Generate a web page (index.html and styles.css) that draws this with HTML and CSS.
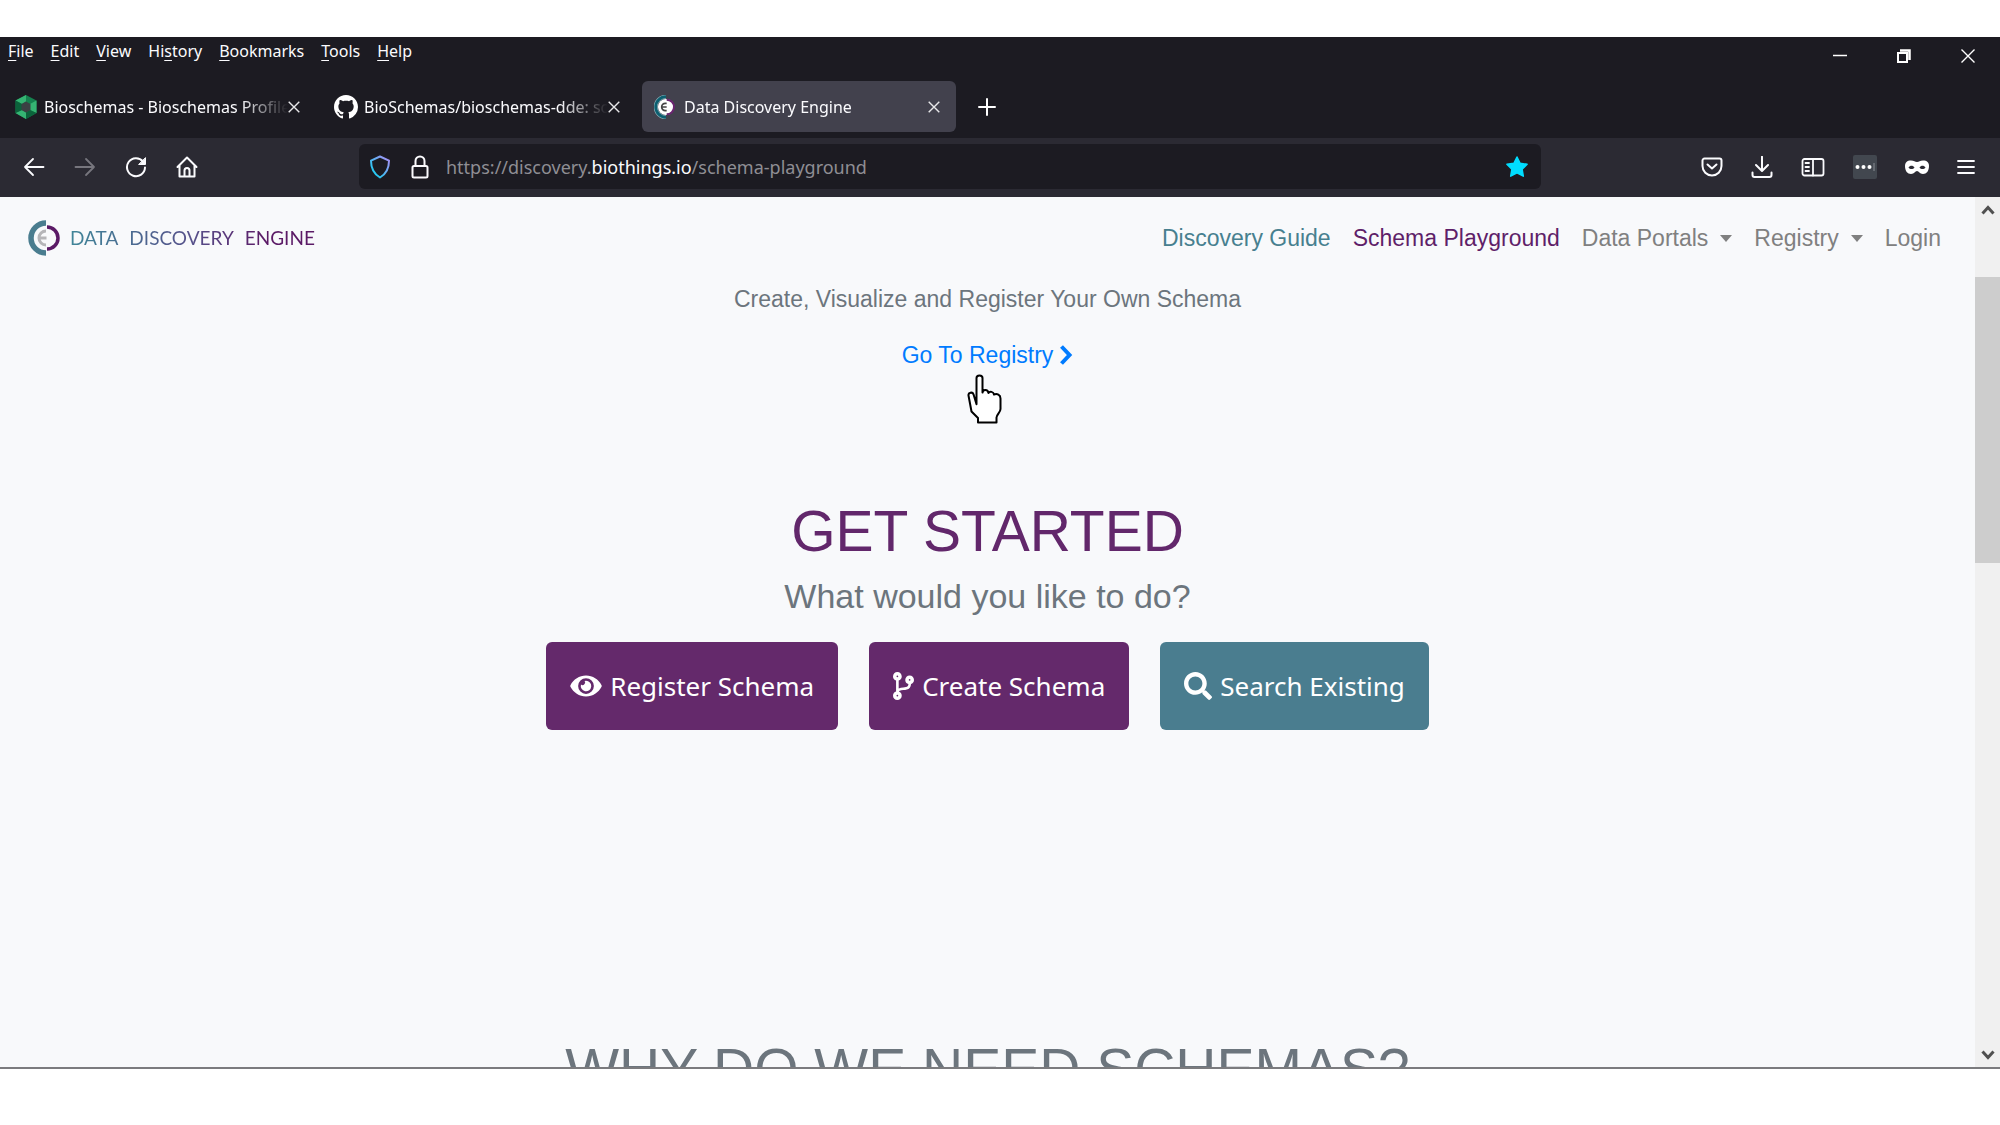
FILE: index.html
```html
<!DOCTYPE html>
<html lang="en">
<head>
<meta charset="utf-8">
<title>Data Discovery Engine</title>
<meta name="viewport" content="width=device-width, initial-scale=1">
<link rel="stylesheet" href="styles.css">
</head>
<body>
<div class="window">
  <header class="chrome">
    <div class="titlebar">
      <nav class="menubar" aria-label="Application menu">
        <button type="button"><u>F</u>ile</button>
        <button type="button"><u>E</u>dit</button>
        <button type="button"><u>V</u>iew</button>
        <button type="button">Hi<u>s</u>tory</button>
        <button type="button"><u>B</u>ookmarks</button>
        <button type="button"><u>T</u>ools</button>
        <button type="button"><u>H</u>elp</button>
      </nav>
      <div class="window-controls">
        <button type="button" aria-label="Minimize"><svg width="14" height="14" viewBox="0 0 14 14"><path d="M0 6.500h14" stroke="#fff" stroke-width="1.500"/></svg></button>
        <button type="button" aria-label="Restore"><svg width="14" height="14" viewBox="0 0 14 14" fill="none" stroke="#fff"><path d="M1 4h9v9H1z" stroke-width="2"/><path d="M3 1.500h9.500V11" stroke-width="2.500"/></svg></button>
        <button type="button" aria-label="Close"><svg width="14" height="14" viewBox="0 0 14 14"><path d="M0.500 0.500l13 13M13.500 0.500l-13 13" stroke="#fff" stroke-width="1.400"/></svg></button>
      </div>
    </div>

    <div class="tabstrip">
      <div class="tab">
        <svg class="favicon" viewBox="0 0 22 24"><path d="M11 0l10.500 5.500v12.500L11 24 .5 18V5.500z" fill="#15824f"/><path d="M11 0L.5 5.500 7 9l4-2.500zM21.500 5.500v12.500L15 15V9zM.5 18L11 24v-6.500L7 15z" fill="#35b573"/><path d="M.5 5.500v12.500L7 15V9zM11 24l10.500-6L15 15l-4 2.500z" fill="#0b633b"/><path d="M11 6.500L15.500 9v6L11 17.500 6.500 15V9z" fill="#3b4143"/></svg>
        <a class="tab-title" href="#">Bioschemas - Bioschemas Profiles</a>
        <button class="tab-close" type="button" aria-label="Close tab"><svg width="12" height="12" viewBox="0 0 12 12"><path d="M.7 .7l10.600 10.600M11.300 .7L.7 11.300" stroke="#e8e8ea" stroke-width="1.400"/></svg></button>
      </div>
      <div class="tab">
        <svg class="favicon" viewBox="0 0 16 16"><path fill="#fff" d="M8 0C3.580 0 0 3.580 0 8c0 3.540 2.290 6.530 5.470 7.590.4.070.55-.17.55-.38 0-.19-.01-.82-.01-1.490-2.010.37-2.530-.49-2.690-.94-.09-.23-.48-.94-.82-1.130-.28-.15-.68-.52-.01-.53.63-.01 1.080.58 1.230.82.72 1.210 1.870.87 2.330.66.070-.52.28-.87.51-1.070-1.780-.2-3.640-.89-3.640-3.950 0-.87.31-1.590.82-2.150-.08-.2-.36-1.020.080-2.120 0 0 .67-.21 2.200.82.64-.18 1.320-.27 2-.27.68 0 1.360.090 2 .27 1.530-1.040 2.200-.82 2.200-.82.44 1.100.16 1.920.080 2.120.51.56.82 1.270.82 2.150 0 3.070-1.870 3.750-3.650 3.950.29.25.54.73.54 1.480 0 1.070-.01 1.930-.01 2.200 0 .21.15.46.55.38A8.013 8.013 0 0016 8c0-4.420-3.580-8-8-8z"/></svg>
        <a class="tab-title" href="#">BioSchemas/bioschemas-dde: schemas</a>
        <button class="tab-close" type="button" aria-label="Close tab"><svg width="12" height="12" viewBox="0 0 12 12"><path d="M.7 .7l10.600 10.600M11.300 .7L.7 11.300" stroke="#e8e8ea" stroke-width="1.400"/></svg></button>
      </div>
      <div class="tab tab-active">
        <svg class="favicon" viewBox="2 0 32 36"><circle cx="18" cy="18" r="12" fill="#fff"/><path d="M18 2.500A15.500 15.500 0 0 0 18 33.500" fill="none" stroke="#8fb0b8" stroke-width="6"/><path d="M18 2.500A15.500 15.500 0 0 0 18 33.500" fill="none" stroke="#0d5f70" stroke-width="4"/><path d="M19 7a11 11 0 0 1 0 22" fill="none" stroke="#6a2470" stroke-width="3"/><path d="M19 12.500h-2a5.500 5.500 0 0 0 0 11h2M12 18h7" fill="none" stroke="#444" stroke-width="2.500"/></svg>
        <a class="tab-title" href="#">Data Discovery Engine</a>
        <button class="tab-close" type="button" aria-label="Close tab"><svg width="12" height="12" viewBox="0 0 12 12"><path d="M.7 .7l10.600 10.600M11.300 .7L.7 11.300" stroke="#e8e8ea" stroke-width="1.400"/></svg></button>
      </div>
      <button class="new-tab" type="button" aria-label="New tab"><svg width="18" height="18" viewBox="0 0 18 18"><path d="M9 1v16M1 9h16" stroke="#fff" stroke-width="2" stroke-linecap="round"/></svg></button>
    </div>

    <div class="toolbar">
      <div class="nav-buttons">
        <button type="button" aria-label="Back"><svg width="22" height="22" viewBox="0 0 22 22" fill="none" stroke="#fbfbfe" stroke-width="1.800" stroke-linecap="round" stroke-linejoin="round"><path d="M20.500 11H2M10 3l-8 8 8 8"/></svg></button>
        <button type="button" aria-label="Forward" disabled><svg width="22" height="22" viewBox="0 0 22 22" fill="none" stroke="#77767e" stroke-width="1.800" stroke-linecap="round" stroke-linejoin="round"><path d="M1.500 11H20M12 3l8 8-8 8"/></svg></button>
        <button type="button" aria-label="Reload"><svg width="22" height="22" viewBox="0 0 22 22" fill="none" stroke="#fbfbfe" stroke-width="2" stroke-linecap="round"><path d="M18 5.500A9 9 0 1 0 20 11.500"/><path d="M20.500 2v6.500H14z" fill="#fbfbfe" stroke-width="1" stroke-linejoin="round"/></svg></button>
        <button type="button" aria-label="Home"><svg width="22" height="22" viewBox="0 0 22 22" fill="none" stroke="#fbfbfe" stroke-width="2" stroke-linecap="round" stroke-linejoin="round"><path d="M1.500 11L11 1.500 20.500 11M3.500 9.500v11h15v-11"/><path d="M8.500 20v-5.500a2.500 2.500 0 0 1 5 0V20"/></svg></button>
      </div>
      <div class="urlbar">
        <svg width="22" height="24" viewBox="0 0 22 24" fill="none"><defs><linearGradient id="shield" x1="0" y1="1" x2="1" y2="0"><stop offset=".2" stop-color="#26c9f2"/><stop offset="1" stop-color="#b08cf5"/></linearGradient></defs><path d="M11 1.500l9 4.200c0 8-3 13.300-9 16.800-6-3.500-9-8.800-9-16.800z" stroke="url(#shield)" stroke-width="2" stroke-linejoin="round"/></svg>
        <svg width="18" height="24" viewBox="0 0 18 24" fill="none" stroke="#fbfbfe" stroke-width="2"><rect x="1.500" y="11" width="15" height="11.500" rx="1.500"/><path d="M4.500 11V6a4.500 4.500 0 0 1 9 0v5"/></svg>
        <div class="address" role="textbox" aria-label="Address" contenteditable="true" spellcheck="false">https://discovery.<b>biothings.io</b>/schema-playground</div>
        <button type="button" aria-label="Edit bookmark"><svg width="24" height="24" viewBox="0 0 24 24"><path d="M12 2l3.100 6.300 7 1-5 4.900 1.200 7L12 17.900 5.700 21.200l1.200-7-5-4.900 7-1z" fill="#00ddff" stroke="#00ddff" stroke-width="1.500" stroke-linejoin="round"/></svg></button>
      </div>
      <div class="tool-buttons">
        <button type="button" aria-label="Save to Pocket"><svg width="22" height="22" viewBox="0 0 22 22" fill="none" stroke="#fbfbfe" stroke-width="2" stroke-linecap="round" stroke-linejoin="round"><path d="M3.500 2.500h15a2 2 0 0 1 2 2V10a9.500 9.500 0 0 1-19 0V4.500a2 2 0 0 1 2-2z"/><path d="M6.500 8.500L11 12.500l4.500-4"/></svg></button>
        <button type="button" aria-label="Downloads"><svg width="22" height="22" viewBox="0 0 22 22" fill="none" stroke="#fbfbfe" stroke-width="2" stroke-linecap="round" stroke-linejoin="round"><path d="M11 .7v14M5 9l6 6 6-6M1.500 16.500v2.500a2 2 0 0 0 2 2h15a2 2 0 0 0 2-2v-2.500"/></svg></button>
        <button type="button" aria-label="Sidebars"><svg width="24" height="22" viewBox="0 0 24 22" fill="none" stroke="#fbfbfe" stroke-width="1.800" stroke-linecap="round"><rect x="1.500" y="3" width="21" height="16.500" rx="2"/><path d="M12 3v16.500M4.500 7h3.500M4.500 11h3.500M4.500 15h3.500"/></svg></button>
        <button type="button" aria-label="Extension"><svg width="24" height="24" viewBox="0 0 24 24"><rect width="24" height="24" rx="2" fill="#42474f"/><g fill="#fff"><circle cx="4.500" cy="12" r="2"/><circle cx="10.500" cy="12" r="2"/><circle cx="16.500" cy="12" r="2"/></g><path d="M21 8v8" stroke="#888d94"/></svg></button>
        <button type="button" aria-label="Private mask"><svg width="24" height="22" viewBox="0 0 24 22"><path fill="#fff" fill-rule="evenodd" d="M6 4.500c3 0 4 1.500 6 1.500s3-1.500 6-1.500c4 0 6 2 6 5.500 0 5-2.500 8-6 8-3.500 0-4-3-6-3s-2.500 3-6 3c-3.500 0-6-3-6-8 0-3.500 2-5.500 6-5.500zM3.500 11.500c1.500 2 4.500 2 6 0-1.500-2.500-4.500-2.500-6 0zm11 0c1.500 2 4.500 2 6 0-1.500-2.500-4.500-2.500-6 0z"/></svg></button>
        <button type="button" aria-label="Open menu"><svg width="18" height="16" viewBox="0 0 18 16"><path d="M1 2h16M1 8h16M1 14h16" stroke="#fbfbfe" stroke-width="1.800" stroke-linecap="round"/></svg></button>
      </div>
    </div>
  </header>

  <div class="viewport">
    <div class="page">
      <div class="navbar">
        <a class="brand" href="#">
          <svg width="32" height="36" viewBox="0 0 32 36" fill="none"><path d="M18 3A15 15 0 0 0 18 33" stroke="#4a7d8f" stroke-width="5.500"/><path d="M19 7a11 11 0 0 1 0 22" stroke="#5b1a66" stroke-width="3.500"/><path d="M18 11a7 7 0 0 0 0 14M11 18h7.500" stroke="#b5b5b8" stroke-width="3"/></svg>
          <span class="brand-name"><span>DATA</span><span>DISCOVERY</span><span>ENGINE</span></span>
        </a>
        <nav class="site-nav" aria-label="Main">
          <a class="teal" href="#">Discovery Guide</a>
          <a class="purple" href="#">Schema Playground</a>
          <button class="dropdown" type="button">Data Portals</button>
          <button class="dropdown" type="button">Registry</button>
          <a href="#">Login</a>
        </nav>
      </div>
      <main>
        <section class="intro">
          <p>Create, Visualize and Register Your Own Schema</p>
          <a class="registry-link" href="#">Go To Registry
            <svg width="14" height="20" viewBox="0 0 14 20" fill="none" stroke="#007bff" stroke-width="4"><path d="M2.500 1.500L10.500 10l-8 8.500"/></svg>
            <svg class="pointer" width="36" height="50" viewBox="0 0 36 50"><path d="M11 48.500v-4.500L4.500 37.500 1.500 21.500c-.5-3 4-4 5-1.200l3 10V4c0-3.500 6-3.500 6 0v14.500c.5-3.500 5.300-3.200 6 .5 1.200-2 5-1.500 5.500 1.500 3-1 6.500 0 6.500 4V35c0 3.500-4 5.500-4 8.500v5z" fill="#fff" stroke="#000" stroke-width="2" stroke-linejoin="round"/></svg>
          </a>
        </section>
        <section class="start">
          <h1>GET STARTED</h1>
          <p>What would you like to do?</p>
          <div class="actions">
            <a class="action" href="#"><svg width="32" height="28" viewBox="0 0 576 512"><path fill="#fff" d="M572.520 241.400C518.290 135.590 410.930 64 288 64S57.680 135.640 3.480 241.410a32.350 32.350 0 0 0 0 29.190C57.710 376.410 165.070 448 288 448s230.320-71.640 284.520-177.410a32.350 32.350 0 0 0 0-29.190zM288 400a144 144 0 1 1 144-144 143.930 143.930 0 0 1-144 144zm0-240a95.310 95.310 0 0 0-25.310 3.790 47.850 47.850 0 0 1-66.900 66.900A95.780 95.780 0 1 0 288 160z"/></svg>Register Schema</a>
            <a class="action" href="#"><svg width="21" height="28" viewBox="0 0 384 512"><path fill="#fff" d="M384 144c0-44.200-35.800-80-80-80s-80 35.800-80 80c0 36.400 24.300 67.100 57.500 76.800-.6 16.100-4.200 28.500-11 36.900-15.400 19.200-49.300 22.400-85.200 25.700-28.200 2.600-57.400 5.400-81.300 16.900v-144c32.500-10.200 56-40.500 56-76.300 0-44.200-35.800-80-80-80S0 35.800 0 80c0 35.800 23.500 66.100 56 76.300v199.300C23.500 365.900 0 396.200 0 432c0 44.200 35.800 80 80 80s80-35.800 80-80c0-34-21.200-63.100-51.200-74.600 3.100-5.200 7.800-9.800 14.900-13.400 16.200-8.200 40.400-10.400 66.100-12.800 42.200-3.900 90-8.400 118.200-43.400 14-17.400 21.100-39.800 21.600-67.900 31.600-10.800 54.400-40.700 54.400-75.900zM80 64c8.800 0 16 7.200 16 16s-7.200 16-16 16-16-7.200-16-16 7.200-16 16-16zm0 384c-8.800 0-16-7.200-16-16s7.200-16 16-16 16 7.200 16 16-7.200 16-16 16zm224-320c8.800 0 16 7.200 16 16s-7.200 16-16 16-16-7.200-16-16 7.200-16 16-16z"/></svg>Create Schema</a>
            <a class="action action-teal" href="#"><svg width="28" height="28" viewBox="0 0 512 512"><path fill="#fff" d="M505 442.700L405.300 343c-4.500-4.500-10.600-7-17-7H372c27.600-35.300 44-79.700 44-128C416 93.100 322.900 0 208 0S0 93.100 0 208s93.100 208 208 208c48.300 0 92.700-16.400 128-44v16.300c0 6.400 2.500 12.500 7 17l99.700 99.700c9.400 9.400 24.600 9.400 33.900 0l28.300-28.300c9.400-9.400 9.400-24.600.1-34zM208 336c-70.700 0-128-57.200-128-128 0-70.700 57.200-128 128-128 70.700 0 128 57.200 128 128 0 70.700-57.200 128-128 128z"/></svg>Search Existing</a>
          </div>
        </section>
        <section class="why"><h2>WHY DO WE NEED SCHEMAS?</h2></section>
      </main>
    </div>
    <div class="scrollbar" aria-hidden="true">
      <svg width="14" height="10" viewBox="0 0 14 10" fill="none" stroke="#505050" stroke-width="3"><path d="M1.500 8.500L7 2.500l5.500 6"/></svg>
      <div class="track"><div class="thumb"></div></div>
      <svg width="14" height="10" viewBox="0 0 14 10" fill="none" stroke="#505050" stroke-width="3"><path d="M1.500 1.500L7 7.500l5.500-6"/></svg>
    </div>
  </div>
</div>
</body>
</html>
```
FILE: styles.css
```css
* { box-sizing: border-box; }

body {
  margin: 0;
  height: 100vh;
  padding: 37px 0 56px;
  background: #fff;
  font-family: "Liberation Sans", Arial, sans-serif;
}

button {
  padding: 0;
  border: 0;
  background: none;
  color: inherit;
  font: inherit;
}

a { color: inherit; text-decoration: none; }
svg { display: block; flex: none; }
h1, h2, p { margin: 0; font-weight: 400; }

.window {
  display: flex;
  flex-direction: column;
  height: 100%;
  border-bottom: 2px solid #7b7b7e;
}

/* Browser chrome */
.chrome {
  background: #1c1b22;
  color: #fbfbfe;
  font-family: "Noto Sans", sans-serif;
  font-size: 16px;
}

.titlebar {
  display: flex;
  justify-content: space-between;
  height: 44px;
}

.menubar {
  display: flex;
  gap: 17px;
  height: 28px;
  padding-left: 8px;
}

.menubar u { text-underline-offset: 3px; text-decoration-thickness: 1px; }

.window-controls {
  display: flex;
  gap: 50px;
  height: 38px;
  padding-right: 25px;
}

.tabstrip {
  display: flex;
  gap: 6px;
  height: 57px;
  padding: 0 2px 6px;
}

.tab {
  display: flex;
  align-items: center;
  width: 314px;
  padding: 0 16px 0 12px;
  border-radius: 6px;
}

.tab-active { background: #42414d; }

.favicon { width: 24px; height: 24px; margin-right: 6px; }

.tab-title {
  flex: 1;
  min-width: 0;
  overflow: hidden;
  line-height: 24px;
  padding-top: 1px;
  white-space: nowrap;
  mask-image: linear-gradient(to left, transparent 0, #000 48px);
}

.new-tab { padding: 0 16px; }

.toolbar {
  display: flex;
  align-items: center;
  height: 59px;
  padding: 0 25px 2px 23px;
  background: #2b2a33;
}

.nav-buttons { display: flex; align-items: center; gap: 29px; width: 336px; }

.urlbar {
  display: flex;
  flex: 1;
  align-items: center;
  height: 45px;
  padding: 0 12px 0 10px;
  border-radius: 6px;
  background: #1c1b22;
}

.urlbar svg + svg { margin-left: 20px; }

.address {
  flex: 1;
  padding-left: 17px;
  color: #8f8e94;
  font-size: 18px;
  outline: 0;
}

.address b { color: #fbfbfe; font-weight: 400; }

.tool-buttons {
  display: flex;
  align-items: center;
  gap: 28px;
  margin-left: 160px;
}

/* Page */
.viewport { display: flex; flex: 1; min-height: 0; }

.page {
  flex: 1;
  overflow: hidden;
  background: #f8f9fb;
  color: #6c757d;
}

.navbar {
  display: flex;
  align-items: center;
  justify-content: space-between;
  height: 82px;
  padding: 0 34px 0 28px;
}

.brand { display: flex; align-items: center; gap: 10px; }

.brand-name {
  display: flex;
  gap: 11px;
  background: linear-gradient(to right, #3f8598, #56508a 50%, #5b1a66 80%);
  background-clip: text;
  color: transparent;
  font-family: Lato, sans-serif;
  font-size: 19px;
  line-height: 22px;
}

.site-nav {
  display: flex;
  gap: 22px;
  color: #808080;
  font-size: 23px;
}

.teal { color: #47808f; }
.purple { color: #5f1f69; }

.dropdown { display: flex; align-items: center; gap: 12px; }

.dropdown::after {
  content: "";
  border: 6px solid transparent;
  border-top: 7px solid #808080;
  border-bottom: 0;
}

main {
  display: flex;
  flex-direction: column;
  align-items: center;
  text-align: center;
}

.intro {
  display: flex;
  flex-direction: column;
  align-items: center;
  gap: 22px;
  padding-top: 3px;
  font-size: 23px;
  line-height: 34px;
}

.registry-link {
  position: relative;
  display: flex;
  align-items: center;
  gap: 6px;
  color: #007bff;
}

.pointer { position: absolute; top: 36px; left: 65px; }

.start { padding-top: 125px; }

.start h1 {
  color: #62276b;
  font-size: 57px;
  line-height: 68px;
}

.start p { padding: 11px 0 26px; font-size: 34px; line-height: 40px; }

.actions { display: flex; justify-content: center; gap: 31px; }

.action {
  display: flex;
  align-items: center;
  gap: 8px;
  height: 88px;
  padding: 0 24px;
  border-radius: 6px;
  background: #64296b;
  color: #fff;
  font-family: "Noto Sans", sans-serif;
  font-size: 26px;
}

.action-teal { background: #4a7d8f; }

.why { padding-top: 305px; }
.why h2 { font-size: 57px; line-height: 68px; }

.scrollbar {
  display: flex;
  flex-direction: column;
  align-items: center;
  width: 25px;
  padding: 8px 0 7px;
  background: #f0f0f0;
}

.track { flex: 1; align-self: stretch; padding-top: 62px; }
.thumb { height: 37%; background: #cdcdcd; }
```
